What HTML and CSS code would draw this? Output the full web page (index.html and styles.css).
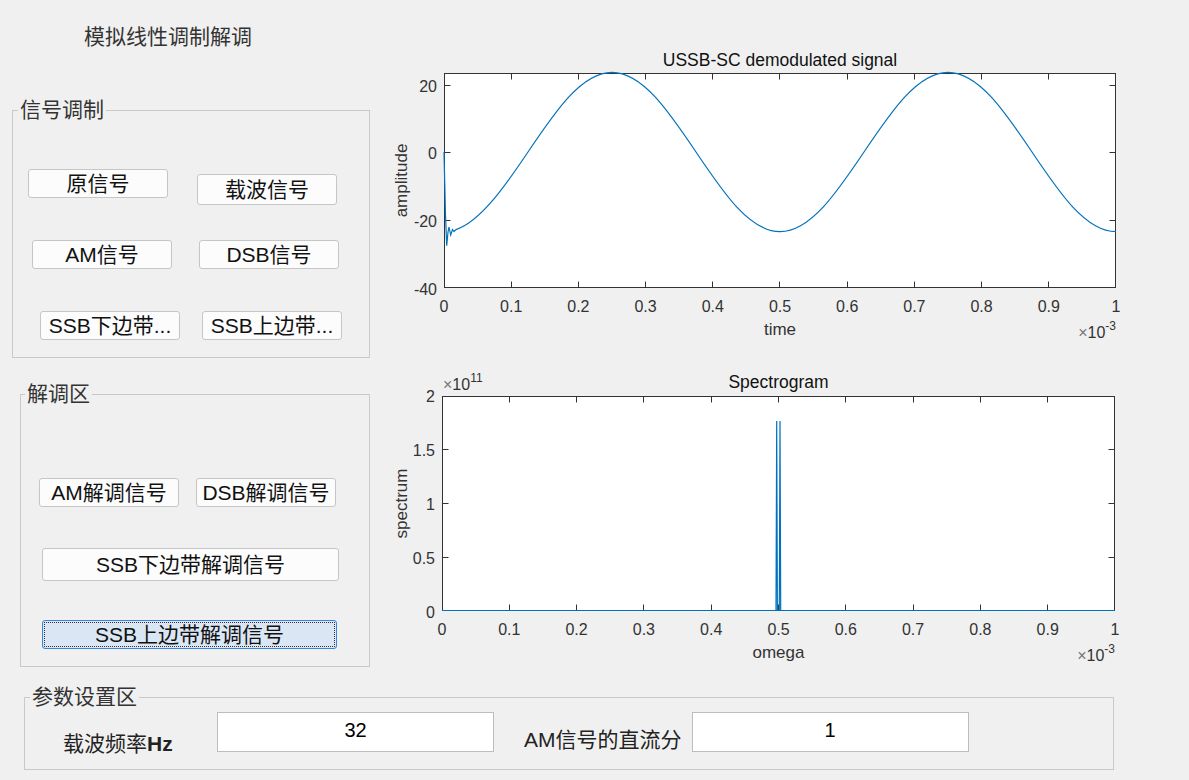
FILE: index.html
```html
<!DOCTYPE html>
<html lang="zh-CN">

<head>
    <meta charset="UTF-8">
    <meta name="viewport" content="width=device-width, initial-scale=1.0">
    <title>模拟线性调制解调</title>
    <link rel="stylesheet" href="styles.css">
</head>

<body>
    <div class="figure">
        <div class="controls">
            <h1 class="app-title">模拟线性调制解调</h1>

            <fieldset class="group group-mod">
                <legend>信号调制</legend>
                <div class="btn-row row-1">
                    <button class="btn">原信号</button>
                    <button class="btn btn-tall">载波信号</button>
                </div>
                <div class="btn-row row-2">
                    <button class="btn">AM信号</button>
                    <button class="btn">DSB信号</button>
                </div>
                <div class="btn-row row-3">
                    <button class="btn">SSB下边带...</button>
                    <button class="btn">SSB上边带...</button>
                </div>
            </fieldset>

            <fieldset class="group group-demod">
                <legend>解调区</legend>
                <div class="btn-row row-1">
                    <button class="btn">AM解调信号</button>
                    <button class="btn">DSB解调信号</button>
                </div>
                <div class="btn-row row-2">
                    <button class="btn btn-wide">SSB下边带解调信号</button>
                </div>
                <div class="btn-row row-3">
                    <button class="btn btn-wide btn-focus">SSB上边带解调信号</button>
                </div>
            </fieldset>
        </div>

        <div class="plots">
            <!-- demodulated signal, drawn in page coordinates -->
            <svg class="plot" viewBox="380 40 809 310" width="809" height="310">
                <rect class="axes-bg" x="444" y="73" width="672" height="215" />
                <rect class="axes-box" x="444.5" y="73.5" width="671" height="214" />
                <path class="ticks" d="M511.5,287.5v-6M578.5,287.5v-6M645.5,287.5v-6M712.5,287.5v-6M779.5,287.5v-6M847.5,287.5v-6M914.5,287.5v-6M981.5,287.5v-6M1048.5,287.5v-6
                    M511.5,73.5v6M578.5,73.5v6M645.5,73.5v6M712.5,73.5v6M779.5,73.5v6M847.5,73.5v6M914.5,73.5v6M981.5,73.5v6M1048.5,73.5v6
                    M444.5,85.5h6M444.5,152.5h6M444.5,220.5h6
                    M1115.5,85.5h-6M1115.5,152.5h-6M1115.5,220.5h-6" />
                <path class="trace" d="M444,152 L445.5,215 L446.7,245.7 L448,232 L449,227 L450.7,235 L452.5,229.5 L454,231.5 L456,229.6
                    C480,221.7 504,187.7 528,152
                    C555.39,111.2 581.6,72.35 612,72.35
                    C642.4,72.35 668.61,111.2 696,152
                    C723.39,192.8 749.6,231.65 780,231.65
                    C810.4,231.65 836.61,192.8 864,152
                    C891.39,111.2 917.6,72.35 948,72.35
                    C978.4,72.35 1004.61,111.2 1032,152
                    C1059.39,192.8 1085.6,231.65 1116,231.65" />

                <g class="tick-label" text-anchor="middle">
                    <text x="444" y="312">0</text>
                    <text x="511.2" y="312">0.1</text>
                    <text x="578.4" y="312">0.2</text>
                    <text x="645.6" y="312">0.3</text>
                    <text x="712.8" y="312">0.4</text>
                    <text x="780" y="312">0.5</text>
                    <text x="847.2" y="312">0.6</text>
                    <text x="914.4" y="312">0.7</text>
                    <text x="981.6" y="312">0.8</text>
                    <text x="1048.8" y="312">0.9</text>
                    <text x="1116" y="312">1</text>
                </g>
                <g class="tick-label" text-anchor="end">
                    <text x="437" y="92">20</text>
                    <text x="437" y="159">0</text>
                    <text x="437" y="227">-20</text>
                    <text x="437" y="294.5">-40</text>
                </g>
                <text class="ax-title" x="780" y="66" text-anchor="middle">USSB-SC demodulated signal</text>
                <text class="ax-label" x="780" y="335" text-anchor="middle">time</text>
                <text class="ax-label" transform="translate(407 180.5) rotate(-90)" text-anchor="middle">amplitude</text>
                <text class="exponent" x="1116" y="338" text-anchor="end"><tspan class="times">×</tspan>10<tspan class="sup" dy="-8">-3</tspan></text>
            </svg>

            <!-- spectrum -->
            <svg class="plot" viewBox="380 360 809 320" width="809" height="320">
                <rect class="axes-bg" x="442" y="396" width="673" height="215" />
                <rect class="axes-box" x="442.5" y="396.5" width="672" height="214" />
                <path class="ticks" d="M509.5,610.5v-6M576.5,610.5v-6M643.5,610.5v-6M711.5,610.5v-6M778.5,610.5v-6M845.5,610.5v-6M913.5,610.5v-6M980.5,610.5v-6M1047.5,610.5v-6
                    M509.5,396.5v6M576.5,396.5v6M643.5,396.5v6M711.5,396.5v6M778.5,396.5v6M845.5,396.5v6M913.5,396.5v6M980.5,396.5v6M1047.5,396.5v6
                    M442.5,449.5h6M442.5,503.5h6M442.5,557.5h6
                    M1114.5,449.5h-6M1114.5,503.5h-6M1114.5,557.5h-6" />
                <path class="trace" d="M442,610.5 H776 L776.7,421 L777.4,610.5 H779.3 L780,421 L780.7,610.5 H1115" />

                <g class="tick-label" text-anchor="middle">
                    <text x="442" y="635">0</text>
                    <text x="509.3" y="635">0.1</text>
                    <text x="576.6" y="635">0.2</text>
                    <text x="643.9" y="635">0.3</text>
                    <text x="711.2" y="635">0.4</text>
                    <text x="778.5" y="635">0.5</text>
                    <text x="845.8" y="635">0.6</text>
                    <text x="913.1" y="635">0.7</text>
                    <text x="980.4" y="635">0.8</text>
                    <text x="1047.7" y="635">0.9</text>
                    <text x="1115" y="635">1</text>
                </g>
                <g class="tick-label" text-anchor="end">
                    <text x="435" y="402">2</text>
                    <text x="435" y="456">1.5</text>
                    <text x="435" y="510">1</text>
                    <text x="435" y="563.5">0.5</text>
                    <text x="435" y="617.5">0</text>
                </g>
                <text class="exponent" x="443" y="390"><tspan class="times">×</tspan>10<tspan class="sup" dy="-8">11</tspan></text>
                <text class="ax-title" x="778.5" y="388" text-anchor="middle">Spectrogram</text>
                <text class="ax-label" x="778.5" y="658" text-anchor="middle">omega</text>
                <text class="ax-label" transform="translate(407 503.5) rotate(-90)" text-anchor="middle">spectrum</text>
                <text class="exponent" x="1115" y="661" text-anchor="end"><tspan class="times">×</tspan>10<tspan class="sup" dy="-8">-3</tspan></text>
            </svg>
        </div>
    </div>

    <fieldset class="group group-params">
        <legend>参数设置区</legend>
        <div class="param-row">
            <label class="param-label label-freq" for="carrierFreq">载波频率<b>Hz</b></label>
            <input class="param-input" type="text" id="carrierFreq" value="32">
            <label class="param-label label-dc" for="dcOffset">AM信号的直流分</label>
            <input class="param-input" type="text" id="dcOffset" value="1">
        </div>
    </fieldset>
</body>

</html>
```

FILE: styles.css
```css
* {
    box-sizing: border-box;
}

body {
    margin: 0;
    width: 1189px;
    height: 780px;
    overflow: hidden;
    background-color: #f0f0f0;
    font-family: "Liberation Sans", "Noto Sans CJK SC", sans-serif;
    color: #1f1f1f;
}

.figure {
    display: flex;
    height: 680px;
}

.controls {
    width: 380px;
    flex: none;
}

.app-title {
    margin: 0;
    padding: 23px 0 0 84px;
    font-size: 21px;
    font-weight: normal;
    line-height: 28px;
    color: #333;
}

/* group boxes */
.group {
    margin: 0;
    padding: 0;
    min-width: 0;
    border: 1px solid #c9c9c9;
}

.group legend {
    padding: 0 2px;
    font-size: 21px;
    line-height: 24px;
    color: #333;
}

.group-mod {
    margin: 47px 0 0 12px;
    width: 358px;
    height: 260px;
}

.group-mod legend {
    margin-left: 5px;
}

.group-demod {
    margin: 24px 0 0 20px;
    width: 350px;
    height: 285px;
}

.group-demod legend {
    margin-left: 4px;
}

.group-params {
    margin: 5px 0 0 24px;
    width: 1090px;
    height: 85px;
}

.group-params legend {
    margin-left: 5px;
}

/* buttons */
.btn-row {
    display: flex;
    align-items: flex-start;
}

.btn {
    width: 140px;
    height: 29px;
    padding: 0;
    border: 1px solid #c6c6c6;
    border-radius: 3px;
    background-color: #fcfcfc;
    font: 21px/27px "Liberation Sans", "Noto Sans CJK SC", sans-serif;
    color: #111;
    white-space: nowrap;
}

.btn-tall {
    margin-top: 5px;
    height: 31px;
}

.btn-wide {
    width: 297px;
    height: 33px;
}

.btn-focus {
    width: 295px;
    height: 29px;
    background-color: #dae6f3;
    border-color: #3a86d8;
    outline: 1px dotted #333;
    outline-offset: -3px;
}

.group-mod .row-1 {
    margin-top: 47px;
    padding-left: 15px;
    gap: 29px;
}

.group-mod .row-2 {
    margin-top: 35px;
    padding-left: 19px;
    gap: 27px;
}

.group-mod .row-3 {
    margin-top: 42px;
    padding-left: 27px;
    gap: 22px;
}

.group-demod .row-1 {
    margin-top: 72px;
    padding-left: 18px;
    gap: 17px;
}

.group-demod .row-2 {
    margin-top: 41px;
    padding-left: 21px;
}

.group-demod .row-3 {
    margin-top: 39px;
    padding-left: 21px;
}

/* parameter inputs */
.param-row {
    display: flex;
    align-items: flex-start;
    margin-top: 3px;
    padding-left: 38px;
}

.param-label {
    font-size: 21px;
    line-height: 24px;
    color: #222;
}

.label-freq {
    width: 154px;
    margin-top: 20px;
}

.label-dc {
    margin: 16px 10px 0 30px;
}

.param-input {
    width: 277px;
    height: 40px;
    padding: 0 0 4px;
    border: 1px solid #bdbdbd;
    background-color: #fff;
    text-align: center;
    font: 20px "Liberation Sans", sans-serif;
    color: #000;
}

/* plots */
.plots {
    flex: 1;
    display: flex;
    flex-direction: column;
    gap: 10px;
    padding-top: 40px;
}

.plot {
    display: block;
    font-family: "Liberation Sans", sans-serif;
}

.axes-bg {
    fill: #fff;
}

.axes-box,
.ticks {
    fill: none;
    stroke: #333;
    stroke-width: 1;
}

.trace {
    fill: none;
    stroke: #0072bd;
    stroke-width: 1.2;
}

.tick-label {
    font-size: 16px;
    fill: #333;
}

.ax-title {
    font-size: 17.5px;
    fill: #111;
}

.ax-label {
    font-size: 17px;
    fill: #333;
}

.exponent {
    font-size: 16px;
    fill: #333;
}

.exponent .times {
    fill: #777;
}

.exponent .sup {
    font-size: 12px;
}
```
